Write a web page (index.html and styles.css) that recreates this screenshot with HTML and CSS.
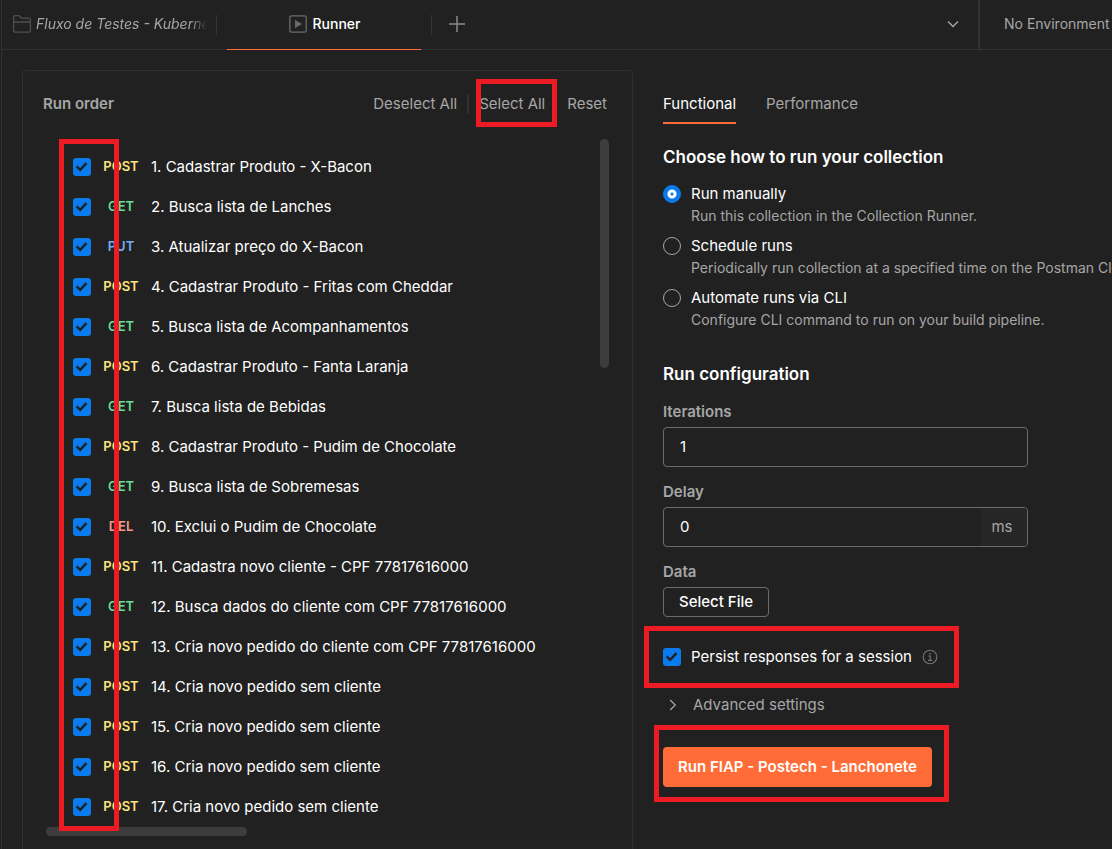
FILE: index.html
```html
<!DOCTYPE html>
<html lang="en">
<head>
<meta charset="utf-8">
<meta name="viewport" content="width=device-width, initial-scale=1">
<title>Runner</title>
<link rel="stylesheet" href="styles.css">
</head>
<body>
<div class="app">
  <header class="tabbar">
    <nav class="tabs" aria-label="Open tabs">
      <a class="tab tab-collection" href="#collection">
        <svg class="icon" width="20" height="20" viewBox="0 0 20 20" fill="none" stroke="#4f4f4f" stroke-width="1.3" stroke-linejoin="round"><path d="M1.6 16.5V3.2Q1.6 1.6 3.2 1.6H7l2.5 2.6h7.3q1.6 0 1.6 1.6v10.7q0 1.6-1.6 1.6H3.2q-1.6 0-1.6-1.6zM1.6 8h16.8"/></svg>
        <span class="tab-title">Fluxo de Testes - Kuberne</span>
      </a>
      <a class="tab tab-active" href="#runner">
        <svg class="icon" width="18" height="18" viewBox="0 0 18 18" fill="none"><rect x=".8" y=".8" width="16.4" height="16.4" rx="1.8" stroke="#6b6b6b" stroke-width="1.3"/><path d="M6 5v8l7-4z" fill="#6b6b6b"/></svg>
        <span>Runner</span>
      </a>
      <button class="icon-button" type="button" aria-label="New tab">
        <svg width="16" height="16" viewBox="0 0 16 16" stroke="#8a8a8a" stroke-width="1.5"><path d="M8 0v16M0 8h16"/></svg>
      </button>
    </nav>
    <button class="icon-button tab-menu" type="button" aria-label="Tab list">
      <svg width="12" height="8" viewBox="0 0 12 8" fill="none" stroke="#a6a6a6" stroke-width="1.4"><path d="M1 1.5l5 5 5-5"/></svg>
    </button>
    <button class="environment" type="button">No Environment</button>
  </header>

  <main class="runner">
    <section class="order-card">
      <div class="order-header">
        <h2 class="order-title">Run order</h2>
        <div class="order-actions">
          <button class="text-button" type="button">Deselect All</button>
          <span class="divider"></span>
          <button class="text-button marked" type="button">Select All<span class="mark mark-select"></span></button>
          <button class="text-button reset" type="button">Reset</button>
        </div>
      </div>
      <div class="order-body">
        <ul class="requests">
          <li><label class="request"><input class="check" type="checkbox" checked><span class="method post">POST</span><span>1. Cadastrar Produto - X-Bacon</span></label></li>
          <li><label class="request"><input class="check" type="checkbox" checked><span class="method get">GET</span><span>2. Busca lista de Lanches</span></label></li>
          <li><label class="request"><input class="check" type="checkbox" checked><span class="method put">PUT</span><span>3. Atualizar preço do X-Bacon</span></label></li>
          <li><label class="request"><input class="check" type="checkbox" checked><span class="method post">POST</span><span>4. Cadastrar Produto - Fritas com Cheddar</span></label></li>
          <li><label class="request"><input class="check" type="checkbox" checked><span class="method get">GET</span><span>5. Busca lista de Acompanhamentos</span></label></li>
          <li><label class="request"><input class="check" type="checkbox" checked><span class="method post">POST</span><span>6. Cadastrar Produto - Fanta Laranja</span></label></li>
          <li><label class="request"><input class="check" type="checkbox" checked><span class="method get">GET</span><span>7. Busca lista de Bebidas</span></label></li>
          <li><label class="request"><input class="check" type="checkbox" checked><span class="method post">POST</span><span>8. Cadastrar Produto - Pudim de Chocolate</span></label></li>
          <li><label class="request"><input class="check" type="checkbox" checked><span class="method get">GET</span><span>9. Busca lista de Sobremesas</span></label></li>
          <li><label class="request"><input class="check" type="checkbox" checked><span class="method del">DEL</span><span>10. Exclui o Pudim de Chocolate</span></label></li>
          <li><label class="request"><input class="check" type="checkbox" checked><span class="method post">POST</span><span>11. Cadastra novo cliente - CPF 77817616000</span></label></li>
          <li><label class="request"><input class="check" type="checkbox" checked><span class="method get">GET</span><span>12. Busca dados do cliente com CPF 77817616000</span></label></li>
          <li><label class="request"><input class="check" type="checkbox" checked><span class="method post">POST</span><span>13. Cria novo pedido do cliente com CPF 77817616000</span></label></li>
          <li><label class="request"><input class="check" type="checkbox" checked><span class="method post">POST</span><span>14. Cria novo pedido sem cliente</span></label></li>
          <li><label class="request"><input class="check" type="checkbox" checked><span class="method post">POST</span><span>15. Cria novo pedido sem cliente</span></label></li>
          <li><label class="request"><input class="check" type="checkbox" checked><span class="method post">POST</span><span>16. Cria novo pedido sem cliente</span></label></li>
          <li><label class="request"><input class="check" type="checkbox" checked><span class="method post">POST</span><span>17. Cria novo pedido sem cliente</span></label></li>
        </ul>
        <span class="thumb thumb-y"></span>
        <span class="thumb thumb-x"></span>
        <span class="mark mark-checks"></span>
      </div>
    </section>

    <form class="config">
      <nav class="modes" aria-label="Run type">
        <a class="mode mode-active" href="#functional">Functional</a>
        <a class="mode" href="#performance">Performance</a>
      </nav>

      <h3 class="heading">Choose how to run your collection</h3>
      <div class="options">
        <label class="option"><input class="radio" type="radio" name="how" checked><span class="option-name">Run manually</span><span class="option-note">Run this collection in the Collection Runner.</span></label>
        <label class="option"><input class="radio" type="radio" name="how"><span class="option-name">Schedule runs</span><span class="option-note">Periodically run collection at a specified time on the Postman Clo</span></label>
        <label class="option"><input class="radio" type="radio" name="how"><span class="option-name">Automate runs via CLI</span><span class="option-note">Configure CLI command to run on your build pipeline.</span></label>
      </div>

      <h3 class="heading heading-config">Run configuration</h3>
      <div class="fields">
        <div class="field">
          <label class="field-label" for="iterations">Iterations</label>
          <div class="box"><input class="box-input" id="iterations" type="text" value="1"></div>
        </div>
        <div class="field">
          <label class="field-label" for="delay">Delay</label>
          <div class="box"><input class="box-input" id="delay" type="text" value="0"><span class="unit">ms</span></div>
        </div>
        <div class="field">
          <label class="field-label" for="file">Data</label>
          <button class="file-button" id="file" type="button">Select File</button>
        </div>
      </div>

      <div class="persist marked">
        <input class="check" id="persist" type="checkbox" checked>
        <label for="persist">Persist responses for a session</label>
        <svg class="info" width="16" height="16" viewBox="0 0 16 16" fill="none" stroke="#757575"><circle cx="8" cy="8" r="6.8" stroke-width="1.1"/><path d="M6.3 7H8.2V11.2M6 11.4H10.2" stroke-width="1.1"/><path d="M7.4 4.7H8.8" stroke-width="1.4"/></svg>
        <span class="mark mark-persist"></span>
      </div>

      <button class="advanced" type="button">
        <svg width="8" height="12" viewBox="0 0 8 12" fill="none" stroke="#a6a6a6" stroke-width="1.3"><path d="M1.2 1l5 5-5 5"/></svg>
        <span>Advanced settings</span>
      </button>

      <div class="submit marked">
        <button class="run-button" type="button">Run FIAP - Postech - Lanchonete</button>
        <span class="mark mark-run"></span>
      </div>
    </form>
  </main>
</div>
</body>
</html>
```

FILE: styles.css
```css
* {
  box-sizing: border-box;
}

body {
  margin: 0;
  background: #212121;
  color: #ffffff;
  font-family: Inter, "Liberation Sans", sans-serif;
  font-size: 15px;
  line-height: 20px;
  overflow-x: hidden;
}

h2,
h3,
ul {
  margin: 0;
  padding: 0;
  font-size: inherit;
}

ul {
  list-style: none;
}

button {
  margin: 0;
  padding: 0;
  border: 0;
  background: none;
  color: inherit;
  font: inherit;
  cursor: pointer;
}

a {
  color: inherit;
  text-decoration: none;
}

svg {
  display: block;
  flex: none;
}

.app {
  display: flex;
  flex-direction: column;
  min-height: 100vh;
  margin-left: 1px;
  border-left: 1px solid #303030;
}

/* Tab bar */
.tabbar {
  display: flex;
  height: 50px;
  border-bottom: 1px solid #333333;
  font-size: 14px;
}

.tabs {
  display: flex;
  flex: 1;
  min-width: 0;
}

.tab {
  display: flex;
  align-items: center;
  position: relative;
  height: 48px;
}

.tab::after {
  content: "";
  position: absolute;
  right: 0;
  top: 15px;
  width: 1px;
  height: 20px;
  background: #363636;
}

.tab-collection {
  width: 215px;
  padding: 0 6px 0 10px;
  gap: 4px;
  color: #a6a6a6;
  font-style: italic;
}

.tab-title {
  flex: 1;
  overflow: hidden;
  white-space: nowrap;
  mask-image: linear-gradient(to right, #000 88%, transparent 98%);
}

.tab-active {
  justify-content: center;
  gap: 6px;
  width: 215px;
  height: 50px;
  padding-bottom: 2px;
  font-weight: 500;
}

.tab-active::before {
  content: "";
  position: absolute;
  left: 10px;
  right: 11px;
  bottom: 0;
  height: 1px;
  background: #ff6c37;
}

.icon-button {
  display: flex;
  align-items: center;
  justify-content: center;
  width: 50px;
  height: 48px;
}

.environment {
  width: 134px;
  padding: 0 0 1px 24px;
  border-left: 2px solid #333333;
  color: #a6a6a6;
  text-align: left;
  white-space: nowrap;
}

/* Page columns */
.runner {
  display: grid;
  flex: 1;
  grid-template-columns: minmax(0, 611fr) minmax(0, 449fr);
  gap: 30px;
  padding: 20px 0 0 20px;
}

/* Run order */
.order-card {
  border: 1px solid #303030;
  border-bottom: 0;
  border-radius: 4px 4px 0 0;
}

.order-header {
  display: flex;
  align-items: center;
  justify-content: space-between;
  height: 68px;
  padding: 0 25px 2px 20px;
  color: #a6a6a6;
}

.order-title {
  font-weight: 600;
}

.order-actions {
  display: flex;
  align-items: center;
  gap: 10px;
}

.divider {
  width: 2px;
  height: 20px;
  background: #303030;
}

.reset {
  margin-left: 12px;
}

.order-body {
  position: relative;
  padding: 8px 0 22px 50px;
}

.request {
  display: flex;
  align-items: center;
  height: 40px;
  white-space: nowrap;
}

.method {
  width: 40px;
  margin: 0 10px;
  padding-bottom: 3px;
  font-size: 13px;
  font-weight: 600;
  text-align: center;
}

.post { color: #ffe47e; }
.get { color: #6bdd9a; }
.put { color: #74aef6; }
.del { color: #f79a8e; }

.check {
  flex: none;
  width: 18px;
  height: 18px;
  margin: 0;
  appearance: none;
  border-radius: 3px;
  background: #097bed;
}

.check:checked {
  background-image: url("data:image/svg+xml,%3Csvg xmlns='http://www.w3.org/2000/svg' viewBox='0 0 18 18'%3E%3Cpath d='M3.6 8.3l3.6 3.5 6.3-6.7' fill='none' stroke='%23212121' stroke-width='2.4'/%3E%3C/svg%3E");
}

.thumb {
  position: absolute;
  border-radius: 5px;
  background: #3d3d3d;
}

.thumb-y {
  top: 0;
  right: 23px;
  width: 9px;
  height: 229px;
}

.thumb-x {
  left: 23px;
  bottom: 13px;
  width: 201px;
  height: 9px;
}

/* Red outlines laid over the interface */
.marked {
  position: relative;
}

.mark {
  position: absolute;
  border: 5px solid #ed1c24;
  pointer-events: none;
}

.mark-select {
  inset: -15px -12px -13px -3px;
}

.mark-checks {
  top: 0;
  bottom: 18px;
  left: 36px;
  width: 60px;
}

.mark-persist {
  inset: -21px -21px -21px -19px;
}

.mark-run {
  inset: -22px -17px -15px -9px;
}

/* Run settings */
.config {
  display: flex;
  flex-direction: column;
  align-items: flex-start;
  padding: 24px 0 30px;
}

.modes {
  display: flex;
  gap: 30px;
  color: #a6a6a6;
}

.mode {
  padding-bottom: 8px;
  border-bottom: 2px solid transparent;
}

.mode-active {
  border-bottom-color: #ff6c37;
  color: #ffffff;
}

.heading {
  margin-top: 21px;
  font-size: 17px;
  font-weight: 600;
  line-height: 24px;
}

.heading-config {
  margin-top: 30px;
}

.options {
  display: grid;
  gap: 8px;
  margin-top: 15px;
}

.option {
  display: grid;
  grid-template-columns: 18px auto;
  column-gap: 10px;
  align-items: center;
  white-space: nowrap;
}

.radio {
  width: 18px;
  height: 18px;
  margin: 0;
  appearance: none;
  border: 1px solid #a6a6a6;
  border-radius: 50%;
}

.radio:checked {
  border-color: #097bed;
  background: radial-gradient(circle, #097bed 1px, #ffffff 2px, #ffffff 4px, #097bed 5px);
}

.option-note {
  grid-column: 2;
  color: #a6a6a6;
  font-size: 14px;
  line-height: 24px;
}

.fields {
  display: grid;
  gap: 15px;
  width: 100%;
  max-width: 365px;
  margin-top: 16px;
}

.field {
  display: flex;
  flex-direction: column;
  align-items: flex-start;
  gap: 5px;
}

.field-label {
  color: #a6a6a6;
  font-size: 15px;
  font-weight: 600;
}

.box {
  display: flex;
  width: 100%;
  height: 40px;
  overflow: hidden;
  border: 1px solid #6b6b6b;
  border-radius: 4px;
}

.box-input {
  flex: 1;
  min-width: 0;
  padding: 0 16px;
  border: 0;
  outline: 0;
  background: none;
  color: inherit;
  font: inherit;
}

.unit {
  display: flex;
  align-items: center;
  justify-content: center;
  width: 46px;
  padding-right: 4px;
  background: #262626;
  color: #a6a6a6;
}

.file-button {
  height: 30px;
  padding: 0 15px;
  border: 1px solid #6b6b6b;
  border-radius: 4px;
  font-weight: 500;
}

.persist {
  display: flex;
  align-items: center;
  gap: 10px;
  margin-top: 30px;
  white-space: nowrap;
}

.advanced {
  display: flex;
  align-items: center;
  gap: 16px;
  margin-top: 28px;
  padding-left: 6px;
  color: #a6a6a6;
}

.submit {
  margin-top: 32px;
}

.run-button {
  height: 40px;
  padding: 0 15px;
  border-radius: 4px;
  background: #ff6c37;
  font-weight: 600;
  white-space: nowrap;
}
```
